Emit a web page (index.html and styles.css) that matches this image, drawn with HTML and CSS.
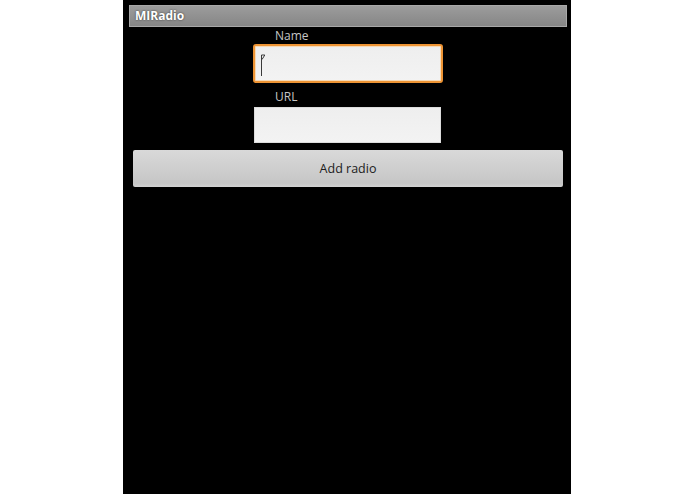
FILE: index.html
```html
<!DOCTYPE html>
<html>
<head>
<meta charset="utf-8">
<link rel="stylesheet" href="styles.css">
</head>
<body>
<div class="screen">
  <div class="titlebar"><span class="title">MIRadio</span></div>
  <div class="form">
    <div class="label">Name</div>
    <div class="input focused">
      <svg class="cursor" width="6" height="23" viewBox="0 0 6 23"><path d="M1.5 22 V1 H4.8 L2 5.5" fill="none" stroke="#3a3a3a" stroke-width="1"/></svg>
    </div>
    <div class="label url-label">URL</div>
    <div class="input plain"></div>
  </div>
  <div class="button">Add radio</div>
</div>
</body>
</html>
```

FILE: styles.css
```css
html, body {
  margin: 0;
  padding: 0;
  background: #ffffff;
}
.screen {
  margin-left: 123px;
  width: 448px;
  height: 494px;
  background: #000000;
  display: flex;
  flex-direction: column;
  overflow: hidden;
  font-family: "Open Sans", "DejaVu Sans", sans-serif;
}
.titlebar {
  margin: 5px 4px 0 6px;
  height: 22px;
  box-sizing: border-box;
  border: 1px solid #a8a8a8;
  background: linear-gradient(#9c9c9c, #868686);
  display: flex;
  align-items: center;
  padding-left: 5px;
}
.title {
  color: #ffffff;
  font-weight: 700;
  font-size: 12px;
  text-shadow: 0 0 2px rgba(0,0,0,0.7);
  line-height: 16px;
}
.form {
  width: 190px;
  align-self: center;
  margin-left: 0;
  display: flex;
  flex-direction: column;
}
.label {
  color: #c6c6c6;
  font-size: 12px;
  line-height: 16px;
  padding-left: 23px;
  margin-top: 1.2px;
  height: 16px;
}
.url-label {
  margin-top: 6px;
}
.input {
  box-sizing: border-box;
  background: linear-gradient(#eeeeee, #f3f3f3);
}
.focused {
  margin: 0 -1px 0 1px;
  height: 39px;
  border: 2px solid #ee9434;
  border-radius: 3px;
  box-shadow: inset 0 0 0 1px #f7d9b4;
  display: flex;
  align-items: flex-start;
  padding: 8px 0 0 5px;
}
.cursor {
  display: block;
}
.plain {
  margin: 1.5px 1px 0 2px;
  height: 36px;
  border: 1px solid #dcdcdc;
}
.button {
  margin: 7px 8px 0 10px;
  height: 37px;
  box-sizing: border-box;
  background: linear-gradient(#d9d9d9, #c6c6c6 90%, #d2d2d2);
  border-radius: 2px;
  display: flex;
  align-items: center;
  justify-content: center;
  color: #1c1c1c;
  font-size: 12.5px;
}
```
